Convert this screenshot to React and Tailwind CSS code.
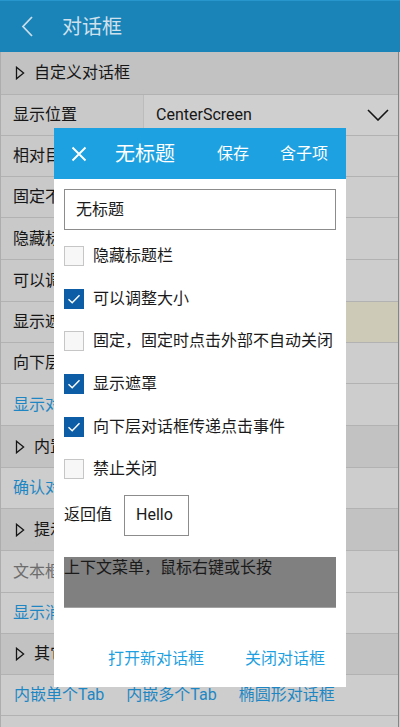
import React from "react";

const FONT = { fontFamily: 'Roboto, "Noto Sans CJK SC", sans-serif' };

function Tri() {
  return (
    <svg width="10" height="14" viewBox="0 0 10 14" className="shrink-0">
      <polygon points="1.5,1.2 8.6,7 1.5,12.8" fill="none" stroke="#151515" strokeWidth="1.3" strokeLinejoin="miter" />
    </svg>
  );
}

function Section({ text, h }) {
  return (
    <div className={`flex items-center gap-[9px] pl-[14px] bg-[#c2c2c2] border-b border-[#b2b2b2] text-[16px] text-[#161616] ${h}`}>
      <Tri />
      <span>{text}</span>
    </div>
  );
}

function Pair({ label, h, right = "bg-[#cdcdcd]", children }) {
  return (
    <div className={`flex border-b border-[#b2b2b2] ${h}`}>
      <div className="w-[143px] shrink-0 flex items-center pl-[12px] bg-[#c9c9c9] border-r border-[#bcbcbc] text-[16px] text-[#161616] whitespace-nowrap overflow-hidden">
        {label}
      </div>
      <div className={`flex-1 flex items-center ${right}`}>{children}</div>
    </div>
  );
}

function Link({ text, h, color = "text-[#1e87c3]" }) {
  return (
    <div className={`flex items-center pl-[12px] bg-[#cdcdcd] border-b border-[#b2b2b2] text-[16px] ${color} ${h}`}>
      {text}
    </div>
  );
}

function Check({ checked, label }) {
  return (
    <div className="flex items-center h-[42.6px] gap-[9px]">
      {checked ? (
        <div className="w-[20px] h-[20px] bg-[#0c5da6] flex items-center justify-center">
          <svg width="20" height="20" viewBox="0 0 20 20">
            <path d="M4.5 10.2 L8.2 13.8 L15.5 6.2" fill="none" stroke="#ffffff" strokeWidth="1.4" />
          </svg>
        </div>
      ) : (
        <div className="w-[20px] h-[20px] bg-[#f7f7f7] border border-[#c6c6c6]" />
      )}
      <span className="text-[16px] text-[#1a1a1a]">{label}</span>
    </div>
  );
}

export default function App() {
  return (
    <div className="relative w-[400px] h-[727px] overflow-hidden bg-[#cdcdcd]" style={FONT}>
      {/* app bar */}
      <div className="h-[52px] bg-[#1a83b8] border-t border-[#2796cc] flex items-center">
        <svg width="16" height="24" viewBox="0 0 16 24" className="ml-[19px]">
          <path d="M13 2 L4 11.5 L13 21" fill="none" stroke="#c9dde8" strokeWidth="1.8" />
        </svg>
        <span className="ml-[27px] text-[20px] text-[#cfe1ec]">对话框</span>
      </div>

      {/* list */}
      <div className="border-l border-[#adadad] border-r border-r-[#858585] w-[399px]">
        <Section text="自定义对话框" h="h-[43px]" />
        <Pair label="显示位置" h="h-[41px]" right="bg-[#cfcfcf]">
          <div className="flex-1 flex items-center justify-between pl-[12px] pr-[9px]">
            <span className="text-[16px] text-[#161616]">CenterScreen</span>
            <svg width="22" height="12" viewBox="0 0 22 12">
              <path d="M1 1 L11 11 L21 1" fill="none" stroke="#151515" strokeWidth="1.6" />
            </svg>
          </div>
        </Pair>
        <Pair label="相对目标" h="h-[41px]" />
        <Pair label="固定不关闭" h="h-[41px]" />
        <Pair label="隐藏标题栏" h="h-[42px]" />
        <Pair label="可以调整大小" h="h-[42px]" />
        <Pair label="显示遮罩" h="h-[41px]" right="bg-[#cdcbb8]" />
        <Pair label="向下层传递事件" h="h-[41px]" />
        <Link text="显示对话框" h="h-[42px]" />
        <Section text="内置对话框" h="h-[42px]" />
        <Link text="确认对话框" h="h-[41px]" />
        <Section text="提示" h="h-[42px]" />
        <Link text="文本框" h="h-[42px]" color="text-[#6c6c6c]" />
        <Link text="显示消息" h="h-[41px]" />
        <Section text="其它" h="h-[41px]" />
        <div className="h-[41px] flex items-center pl-[13px] gap-[22px] bg-[#cdcdcd] border-b border-[#b2b2b2] text-[16px] text-[#1e87c3]">
          <span>内嵌单个Tab</span>
          <span>内嵌多个Tab</span>
          <span>椭圆形对话框</span>
        </div>
        <div className="h-[20px] bg-[#cdcdcd]" />
      </div>

      {/* dialog */}
      <div className="absolute left-[54px] top-[128px] w-[292px] h-[559px] bg-white flex flex-col">
        <div className="h-[51px] bg-[#1da1e1] flex items-center text-white">
          <svg width="16" height="16" viewBox="0 0 16 16" className="ml-[17px]">
            <path d="M1.5 1.5 L14.5 14.5 M14.5 1.5 L1.5 14.5" fill="none" stroke="#ffffff" strokeWidth="1.9" />
          </svg>
          <span className="ml-[28px] text-[20px]">无标题</span>
          <span className="ml-[42px] text-[16px]">保存</span>
          <span className="ml-[31px] text-[16px]">含子项</span>
        </div>
        <div className="flex flex-col px-[10px]">
          <div className="mt-[10px] h-[41px] border border-[#8c8c8c] flex items-center pl-[11px] text-[16px] text-[#1a1a1a]">
            无标题
          </div>
          <div className="mt-[5px] flex flex-col">
            <Check checked={false} label="隐藏标题栏" />
            <Check checked label="可以调整大小" />
            <Check checked={false} label="固定，固定时点击外部不自动关闭" />
            <Check checked label="显示遮罩" />
            <Check checked label="向下层对话框传递点击事件" />
            <Check checked={false} label="禁止关闭" />
          </div>
          <div className="mt-[4px] flex items-center h-[41px]">
            <span className="text-[16px] text-[#1a1a1a]">返回值</span>
            <div className="ml-[12px] w-[65px] h-[41px] border border-[#8c8c8c] flex items-center pl-[11px] text-[16px] text-[#1a1a1a]">
              Hello
            </div>
          </div>
          <div className="mt-[21px] h-[51px] bg-[#808080] border-b border-[#a3a3a3] text-[16px] leading-[21px] text-[#1a1a1a]">
            上下文菜单，鼠标右键或长按
          </div>
          <div className="mt-[35px] h-[32px] flex items-center justify-end gap-[41px] pr-[11px] text-[16px] text-[#1e9fe0]">
            <span>打开新对话框</span>
            <span>关闭对话框</span>
          </div>
        </div>
      </div>
    </div>
  );
}
